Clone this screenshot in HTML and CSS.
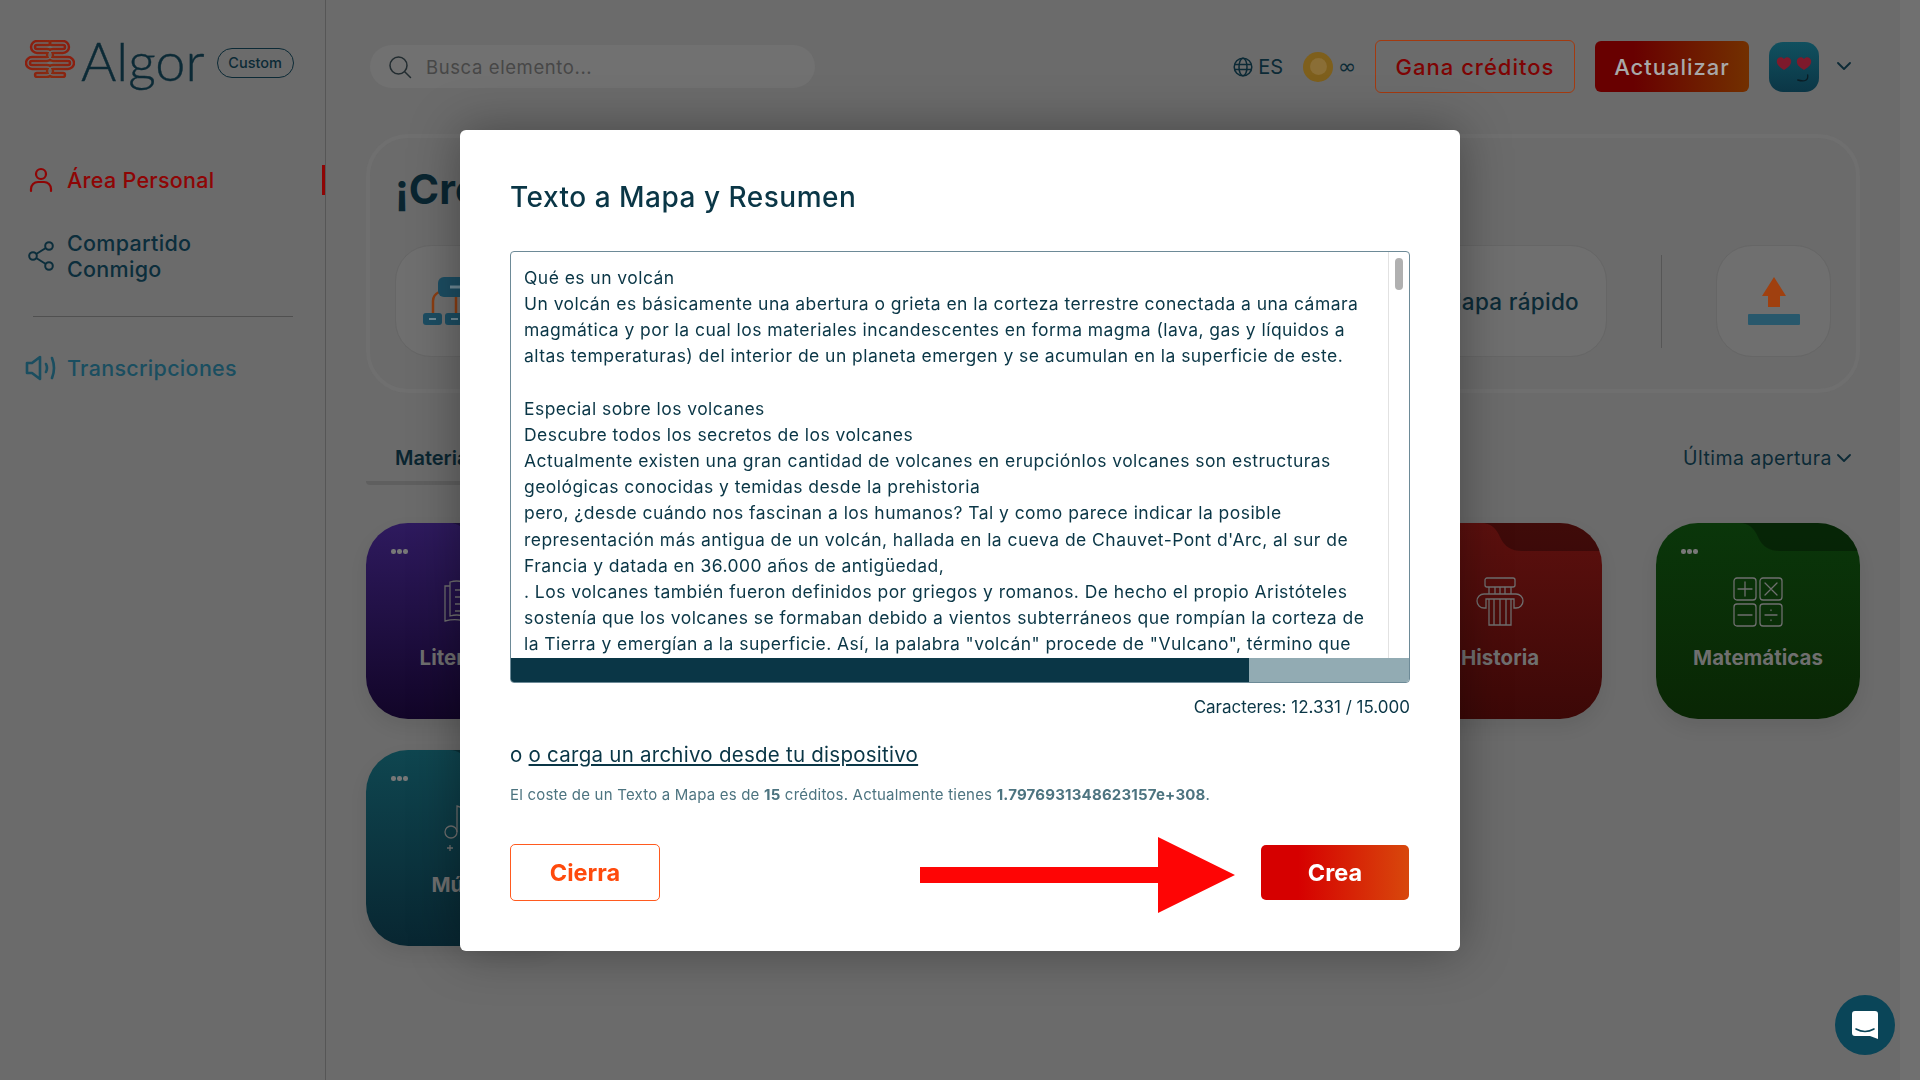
FILE: index.html
```html
<!DOCTYPE html>
<html lang="es">
<head>
  <meta charset="UTF-8">
  <title>Algor</title>
  <link rel="stylesheet" href="styles.css">
</head>
<body>
  <div class="app">
    <aside class="sidebar">
      <div class="logo-row">
        <svg class="brain" viewBox="0 0 50 38" width="50" height="38">
          <defs>
            <linearGradient id="brainGrad" gradientUnits="userSpaceOnUse" x1="0" y1="0" x2="50" y2="20">
              <stop offset="0" stop-color="#8c1a0e"/>
              <stop offset="1" stop-color="#853412"/>
            </linearGradient>
            <path id="lobe" d="M23 3H12a4 4 0 0 0 0 8h10a4 4 0 0 1 0 8H7a4 4 0 0 0 0 8h15a4 4 0 0 1 0 8H12"/>
          </defs>
          <g fill="none" stroke-linecap="round">
            <g stroke="url(#brainGrad)" stroke-width="6.4">
              <use href="#lobe"/>
              <use href="#lobe" transform="matrix(-1 0 0 1 50 0)"/>
            </g>
            <g stroke="#6b6b6b" stroke-width="1.5">
              <use href="#lobe"/>
              <use href="#lobe" transform="matrix(-1 0 0 1 50 0)"/>
            </g>
          </g>
        </svg>
        <span class="logo-text">Algor</span>
        <span class="plan-pill">Custom</span>
      </div>

      <nav class="nav">
        <a class="nav-item nav-item-active">
          <svg class="nav-icon" viewBox="0 0 24 26" width="24" height="26" fill="none" stroke="currentColor" stroke-width="2.2" stroke-linecap="round">
            <circle cx="12" cy="7" r="5"/>
            <path d="M2 24v-2a7 7 0 0 1 7-7h6a7 7 0 0 1 7 7v2"/>
          </svg>
          <span>Área Personal</span>
        </a>
        <a class="nav-item">
          <svg class="nav-icon" viewBox="0 0 26 30" width="26" height="30" fill="none" stroke="currentColor" stroke-width="2">
            <circle cx="5" cy="15" r="3.8"/>
            <circle cx="21" cy="5" r="3.8"/>
            <circle cx="21" cy="25" r="3.8"/>
            <path d="M8.2 13 17.8 7M8.2 17l9.6 6"/>
          </svg>
          <span>Compartido<br>Conmigo</span>
        </a>
      </nav>
      <div class="nav-divider"></div>
      <a class="nav-item nav-item-sound">
        <svg class="nav-icon" viewBox="0 0 32 26" width="32" height="26" fill="none" stroke="currentColor" stroke-width="2.6" stroke-linecap="round" stroke-linejoin="round">
          <path d="M2 8h5l8-6v22l-8-6H2z"/>
          <path d="M21 9q2 4 0 8M27 3q4 10 0 20"/>
        </svg>
        <span>Transcripciones</span>
      </a>
    </aside>

    <main class="main">
      <header class="topbar">
        <div class="search">
          <svg viewBox="0 0 24 24" width="24" height="24" fill="none" stroke="#222c30" stroke-width="1.5" stroke-linecap="round">
            <circle cx="10.5" cy="10.5" r="8.5"/>
            <path d="m17 17 5.5 5.5"/>
          </svg>
          <span>Busca elemento...</span>
        </div>
        <div class="topbar-right">
          <svg class="globe" viewBox="0 0 20 20" width="20" height="20" fill="none" stroke="#0c2a36" stroke-width="1.5">
            <circle cx="10" cy="10" r="8.8"/>
            <ellipse cx="10" cy="10" rx="4" ry="8.8"/>
            <path d="M1.5 7.5h17M1.5 12.5h17"/>
          </svg>
          <span class="lang">ES</span>
          <span class="coin"><span class="coin-inner"></span></span>
          <span class="infinity">∞</span>
          <button class="btn-credits">Gana créditos</button>
          <button class="btn-upgrade">Actualizar</button>
          <span class="avatar">
            <svg viewBox="0 0 50 50" width="50" height="50">
              <path d="M15 28c-5-3-8-6-7-10 1-3 5-4 7-1 2-3 6-2 7 1 1 4-2 7-7 10z" fill="#7d1a2c"/>
              <path d="M35 28c-5-3-8-6-7-10 1-3 5-4 7-1 2-3 6-2 7 1 1 4-2 7-7 10z" fill="#7d1a2c"/>
              <path d="M38.7 33q1 8-10 5" fill="none" stroke="#0a1c24" stroke-width="1.3" stroke-linecap="round"/>
            </svg>
          </span>
          <svg class="chevron" viewBox="0 0 14 9" width="14" height="9" fill="none" stroke="#0c2a36" stroke-width="1.8" stroke-linecap="round" stroke-linejoin="round">
            <path d="m1 1 6 6 6-6"/>
          </svg>
        </div>
      </header>

      <section class="create-panel">
        <h2 class="create-title">¡Crea</h2>
        <div class="create-row">
          <div class="tile tile-map">
            <svg viewBox="0 0 60 48" width="60" height="48">
              <path d="M10 36V24q0-6 6-9M33 36V18" fill="none" stroke="#8a3d12" stroke-width="2.5"/>
              <rect x="15" y="0" width="42" height="20" rx="6" fill="#1c4d62"/>
              <rect x="27" y="8.5" width="14" height="3" fill="#6f8a96"/>
              <rect x="0" y="36" width="19" height="12" rx="3" fill="#1c4d62"/>
              <rect x="22" y="36" width="19" height="12" rx="3" fill="#1c4d62"/>
              <rect x="6" y="41" width="7" height="2" fill="#6f8a96"/>
              <rect x="28" y="41" width="7" height="2" fill="#6f8a96"/>
            </svg>
          </div>
          <div class="tile tile-quick">Mapa rápido</div>
          <div class="create-divider"></div>
          <div class="tile tile-upload">
            <svg viewBox="0 0 52 48" width="52" height="48">
              <path d="M26 0 38 19H32V30H20V19H14z" fill="#a0400f"/>
              <rect x="0" y="37" width="52" height="11" rx="1" fill="#28586c"/>
            </svg>
          </div>
        </div>
      </section>

      <div class="tabs-row">
        <div class="tab-active">Materiales</div>
        <div class="sort">
          <span>Última apertura</span>
          <svg viewBox="0 0 14 9" width="14" height="9" fill="none" stroke="#0c2a36" stroke-width="1.8" stroke-linecap="round" stroke-linejoin="round">
            <path d="m1 1 6 6 6-6"/>
          </svg>
        </div>
      </div>

      <div class="folders">
        <div class="folder folder-purple">
          <svg class="folder-tab" viewBox="0 0 120 28" width="120" height="28"><path d="M0 0q12 0 18 14 6 14 22 14h80V0z"/></svg>
          <div class="folder-dots"><i></i><i></i><i></i></div>
          <svg class="folder-icon" viewBox="0 0 50 50" width="50" height="50" fill="none" stroke="#6f6f6f" stroke-width="1.3">
            <path d="M25 46V8M25 46C18 42 10 42 2 44V9h5M25 46c7-4 15-4 23-2V9h-5"/>
            <path d="M7 39V5c7-2 13-1 18 3 5-4 11-5 18-3v34c-7-2-13-1-18 3-5-4-11-5-18-3z"/>
            <path d="M12 13h9M12 20h9M12 27h9M12 34h9M29 13h9M29 20h9M29 27h9M29 34h9"/>
          </svg>
          <div class="folder-label">Literatura</div>
        </div>
        <div class="folder folder-red folder-col5">
          <svg class="folder-tab" viewBox="0 0 120 28" width="120" height="28"><path d="M0 0q12 0 18 14 6 14 22 14h80V0z"/></svg>
          <svg class="folder-icon" viewBox="0 0 50 50" width="50" height="50" fill="none" stroke="#6f6f6f" stroke-width="1.3">
            <rect x="10" y="1" width="30" height="9" rx="2"/>
            <path d="M14 10v7M20 10v7M25 10v7M30 10v7M36 10v7"/>
            <path d="M9 17h32a6.5 6.5 0 0 1 0 14h-2V22H11v9H9a6.5 6.5 0 0 1 0-14z"/>
            <path d="M14 22v26h22V22M19 22v26M25 22v26M31 22v26"/>
          </svg>
          <div class="folder-label">Historia</div>
        </div>
        <div class="folder folder-green">
          <svg class="folder-tab" viewBox="0 0 120 28" width="120" height="28"><path d="M0 0q12 0 18 14 6 14 22 14h80V0z"/></svg>
          <div class="folder-dots"><i></i><i></i><i></i></div>
          <svg class="folder-icon" viewBox="0 0 50 50" width="50" height="50" fill="none" stroke="#6f6f6f" stroke-width="1.3" stroke-linecap="round">
            <rect x="1" y="1" width="22" height="22" rx="3"/>
            <rect x="27" y="1" width="22" height="22" rx="3"/>
            <rect x="1" y="27" width="22" height="22" rx="3"/>
            <rect x="27" y="27" width="22" height="22" rx="3"/>
            <path d="M5 12h14M12 5v14M32 6l12 12M44 6 32 18M5 38h14M32 38h12M38 33v.5M38 43v.5"/>
          </svg>
          <div class="folder-label">Matemáticas</div>
        </div>
        <div class="folder folder-teal">
          <svg class="folder-tab" viewBox="0 0 120 28" width="120" height="28"><path d="M0 0q12 0 18 14 6 14 22 14h80V0z"/></svg>
          <div class="folder-dots"><i></i><i></i><i></i></div>
          <svg class="folder-icon" viewBox="0 0 50 50" width="50" height="50" fill="none" stroke="#6f6f6f" stroke-width="1.3">
            <circle cx="8" cy="28" r="6"/>
            <path d="M14 28V2q8 2 12 10M4 44h6M7 41v6"/>
          </svg>
          <div class="folder-label">Música</div>
        </div>
      </div>
    </main>
    <div class="page-scroll"></div>
  </div>

  <div class="chat-bubble">
    <svg viewBox="0 0 28 30" width="28" height="30">
      <path d="M4 1h20a3 3 0 0 1 3 3v25l-8-3H4a3 3 0 0 1-3-3V4a3 3 0 0 1 3-3z" fill="#fff"/>
      <path d="M5 19q9 5 18 0" fill="none" stroke="#0a4558" stroke-width="1.6" stroke-linecap="round"/>
    </svg>
  </div>

  <div class="modal-backdrop">
    <div class="modal">
      <h1 class="modal-title">Texto a Mapa y Resumen</h1>
      <div class="text-box">
        <div class="text-area">
          <div class="text-lines">Qué es un volcán
Un volcán es básicamente una abertura o grieta en la corteza terrestre conectada a una cámara
magmática y por la cual los materiales incandescentes en forma magma (lava, gas y líquidos a
altas temperaturas) del interior de un planeta emergen y se acumulan en la superficie de este.

Especial sobre los volcanes
Descubre todos los secretos de los volcanes
Actualmente existen una gran cantidad de volcanes en erupciónlos volcanes son estructuras
geológicas conocidas y temidas desde la prehistoria
pero, ¿desde cuándo nos fascinan a los humanos? Tal y como parece indicar la posible
representación más antigua de un volcán, hallada en la cueva de Chauvet-Pont d'Arc, al sur de
Francia y datada en 36.000 años de antigüedad,
. Los volcanes también fueron definidos por griegos y romanos. De hecho el propio Aristóteles
sostenía que los volcanes se formaban debido a vientos subterráneos que rompían la corteza de
la Tierra y emergían a la superficie. Así, la palabra "volcán" procede de "Vulcano", término que</div>
          <div class="text-scroll"><div class="text-thumb"></div></div>
        </div>
        <div class="progress"><div class="progress-fill" style="width: 82.2%"></div></div>
      </div>
      <div class="char-count">Caracteres: 12.331 / 15.000</div>
      <div class="upload-line">o <a class="upload-link">o carga un archivo desde tu dispositivo</a></div>
      <div class="cost-line">El coste de un Texto a Mapa es de <b>15</b> créditos. Actualmente tienes <b>1.7976931348623157e+308</b>.</div>
      <div class="modal-actions">
        <button class="btn-close">Cierra</button>
        <svg class="red-arrow" viewBox="0 0 315 76" width="315" height="76">
          <path d="M0 30H238V0L315 38 238 76V46H0z" fill="#fe0505"/>
        </svg>
        <button class="btn-create">Crea</button>
      </div>
    </div>
  </div>
</body>
</html>
```

FILE: styles.css
```css
* {
  box-sizing: border-box;
}

body {
  margin: 0;
  height: 100vh;
  overflow: hidden;
  background: #6b6b6b;
  color: #0c2a36;
  font-family: Inter, "Open Sans", sans-serif;
}

.app {
  display: flex;
  height: 100vh;
}

/* sidebar */

.sidebar {
  width: 326px;
  flex-shrink: 0;
  border-right: 1px solid #565656;
  padding: 40px 0 0 25px;
}

.logo-row {
  display: flex;
  align-items: center;
  height: 42px;
}

.brain {
  margin-top: -4px;
}

.logo-text {
  font-family: Lato, sans-serif;
  font-weight: 300;
  font-size: 54px;
  color: #0c2a36;
  margin-left: 6px;
  line-height: 42px;
  -webkit-text-stroke: 0.4px #0c2a36;
}

.plan-pill {
  margin-left: 12px;
  margin-top: 3px;
  width: 77px;
  height: 30px;
  border: 1px solid #0c2a36;
  border-radius: 15px;
  font-size: 14.5px;
  font-weight: 500;
  line-height: 28px;
  text-align: center;
}

.nav {
  margin-top: 85px;
  display: flex;
  flex-direction: column;
  gap: 37px;
}

.nav-item {
  display: flex;
  align-items: center;
  position: relative;
  font-size: 21.5px;
  font-weight: 500;
  line-height: 26px;
  letter-spacing: 0.3px;
  color: #0c2e3c;
}

.nav-icon {
  flex-shrink: 0;
  width: 32px;
  margin-right: 10px;
}

.nav-item-active {
  color: #8e0505;
}

.nav-item-active::after {
  content: "";
  position: absolute;
  right: 0;
  top: -2px;
  width: 3px;
  height: 30px;
  background: #8e0505;
}

.nav-divider {
  margin: 34px 32px 0 8px;
  border-top: 1px solid #505050;
}

.nav-item-sound {
  margin-top: 38px;
  color: #1a4e60;
}

/* topbar */

.main {
  flex: 1;
  min-width: 0;
  padding: 45px 40px 0 40px;
}

.page-scroll {
  width: 20px;
  background: #707070;
}

.topbar {
  display: flex;
  align-items: center;
  justify-content: space-between;
  height: 43px;
  padding-right: 9px;
}

.search {
  display: flex;
  align-items: center;
  gap: 14px;
  width: 445px;
  height: 43px;
  margin-left: 4px;
  padding-left: 18px;
  background: #717171;
  border-radius: 22px;
  font-size: 18.5px;
  letter-spacing: 0.6px;
  color: #474747;
}

.topbar-right {
  display: flex;
  align-items: center;
}

.lang {
  margin-left: 5px;
  font-size: 20px;
  color: #0c2a36;
}

.coin {
  display: flex;
  align-items: center;
  justify-content: center;
  width: 30px;
  height: 30px;
  margin-left: 20px;
  border-radius: 50%;
  background: #7e5f1c;
}

.coin-inner {
  width: 17px;
  height: 17px;
  border-radius: 50%;
  background: #8a6e36;
}

.infinity {
  margin-left: 5px;
  width: 16px;
  font-size: 22px;
  line-height: 22px;
  color: #0c2a36;
  font-family: "DejaVu Sans", sans-serif;
}

.btn-credits {
  width: 200px;
  height: 53px;
  margin-left: 21px;
  background: transparent;
  border: 1.5px solid #a33a10;
  border-radius: 6px;
  color: #7e0303;
  font: 500 22px Inter, sans-serif;
  letter-spacing: 1px;
}

.btn-upgrade {
  width: 154px;
  height: 51px;
  margin-left: 20px;
  background: linear-gradient(90deg, #680000 25%, #723000);
  border: none;
  border-radius: 6px;
  color: #a8a8a8;
  font: 500 22px Inter, sans-serif;
  letter-spacing: 1px;
}

.avatar {
  display: block;
  width: 50px;
  height: 50px;
  margin-left: 20px;
  border-radius: 14px;
  background: linear-gradient(#10505f, #0b3646);
  overflow: hidden;
}

.chevron {
  margin-left: 18px;
}

/* create panel */

.create-panel {
  height: 259px;
  margin-top: 46px;
  border: 4px solid #6f6f6f;
  border-radius: 42px;
  padding: 26px 25px 0 25px;
}

.create-title {
  margin: 0;
  font-size: 41px;
  line-height: 50px;
  font-weight: 700;
  color: #0a2530;
}

.create-row {
  display: flex;
  align-items: center;
  margin-top: 31px;
}

.tile {
  display: flex;
  align-items: center;
  justify-content: center;
  height: 112px;
  background: #6f6f6f;
  border: 1px solid #666;
  border-radius: 36px;
}

.tile-map {
  width: 280px;
  justify-content: flex-start;
  padding-left: 27px;
}

.tile-quick {
  margin-left: auto;
  width: 280px;
  font-size: 22.5px;
  letter-spacing: 0.3px;
  font-weight: 500;
  color: #0c2a36;
  justify-content: flex-end;
  padding-right: 27px;
}

.create-divider {
  width: 1px;
  height: 93px;
  margin: 0 54px;
  background: #565656;
}

.tile-upload {
  width: 115px;
}

/* materials */

.tabs-row {
  display: flex;
  align-items: flex-start;
  justify-content: space-between;
  margin-top: 50px;
  height: 42px;
}

.tab-active {
  width: 300px;
  height: 42px;
  padding-left: 29px;
  border-bottom: 4px solid #5f5f5f;
  border-radius: 0 0 4px 4px;
  font-size: 20px;
  font-weight: 600;
  line-height: 30px;
  color: #0a2530;
}

.sort {
  display: flex;
  align-items: center;
  gap: 5px;
  font-size: 19.5px;
  letter-spacing: 0.45px;
  line-height: 30px;
  color: #0c2a36;
  padding-right: 9px;
}

.folders {
  display: grid;
  grid-template-columns: repeat(6, 204px);
  grid-auto-rows: 196px;
  column-gap: 54px;
  row-gap: 31px;
  margin-top: 38px;
}

.folder {
  position: relative;
  display: flex;
  flex-direction: column;
  align-items: center;
  padding-top: 54px;
  border-radius: 42px;
  overflow: hidden;
  box-shadow: 0 8px 18px rgba(0, 0, 0, 0.08);
}

.folder-col5 {
  grid-column: 5;
}

.folder-purple {
  background: linear-gradient(#2e1a5e, #120528);
}

.folder-teal {
  grid-column: 1;
  background: linear-gradient(#0f4650, #082631);
}

.folder-red {
  background: linear-gradient(#5c100e, #3c0807);
}

.folder-green {
  background: linear-gradient(#0a360a, #092604);
}

.folder-tab {
  position: absolute;
  top: 0;
  right: 0;
  fill: rgba(0, 0, 0, 0.3);
}

.folder-dots {
  position: absolute;
  top: 26px;
  left: 25px;
  display: flex;
  gap: 1.5px;
}

.folder-dots i {
  width: 4.5px;
  height: 4.5px;
  border-radius: 50%;
  background: #777;
}

.folder-label {
  margin-top: 18px;
  font-size: 20.5px;
  font-weight: 700;
  line-height: 26px;
  color: #6f6f6f;
}

/* chat */

.chat-bubble {
  position: fixed;
  right: 25px;
  bottom: 25px;
  display: flex;
  align-items: center;
  justify-content: center;
  width: 60px;
  height: 60px;
  border-radius: 50%;
  background: #0a4558;
}

/* modal */

.modal-backdrop {
  position: fixed;
  inset: 0;
  display: flex;
  align-items: center;
  justify-content: center;
}

.modal {
  width: 1000px;
  height: 821px;
  padding: 50px 50px 0;
  background: #fff;
  border-radius: 6px;
  box-shadow: 0 0 50px rgba(0, 0, 0, 0.35);
  color: #0a3646;
}

.modal-title {
  margin: 0;
  font-size: 28px;
  letter-spacing: 0.5px;
  font-weight: 500;
  line-height: 34px;
}

.text-box {
  height: 432px;
  margin-top: 37px;
  border: 1px solid #6d8a97;
  border-radius: 4px;
  overflow: hidden;
  display: flex;
  flex-direction: column;
}

.text-area {
  flex: 1;
  min-height: 0;
  display: flex;
  justify-content: space-between;
  overflow: hidden;
}

.text-lines {
  padding: 13px 0 0 13px;
  font-size: 17.5px;
  letter-spacing: 0.45px;
  line-height: 26.2px;
  white-space: pre;
}

.text-scroll {
  width: 21px;
  flex-shrink: 0;
  padding: 6px 5px 0 6px;
  border-left: 1px solid #e2e2e2;
}

.text-thumb {
  width: 8px;
  height: 32px;
  border-radius: 4px;
  background: #b0b0b0;
}

.progress {
  height: 24px;
  flex-shrink: 0;
  background: #92abb3;
}

.progress-fill {
  height: 100%;
  background: #0a3646;
}

.char-count {
  margin-top: 13px;
  text-align: right;
  font-size: 17px;
  line-height: 22px;
}

.upload-line {
  margin-top: 24px;
  font-size: 20.5px;
  letter-spacing: 0.25px;
  line-height: 26px;
}

.upload-link {
  text-decoration: underline;
}

.cost-line {
  margin-top: 15px;
  font-size: 15px;
  letter-spacing: 0.2px;
  line-height: 24px;
  color: #4d7480;
}

.modal-actions {
  position: relative;
  display: flex;
  align-items: center;
  justify-content: space-between;
  height: 57px;
  margin-top: 37px;
}

.btn-close {
  width: 150px;
  height: 57px;
  background: #fff;
  border: 1px solid #ff5a1f;
  border-radius: 5px;
  color: #ff4a0c;
  font: 700 23.5px Inter, sans-serif;
}

.btn-create {
  width: 148px;
  height: 55px;
  margin-right: 1px;
  background: linear-gradient(90deg, #d60000 25%, #d8480c);
  border: none;
  border-radius: 5px;
  color: #fff;
  font: 700 23.5px Inter, sans-serif;
}

.red-arrow {
  position: absolute;
  left: 410px;
  top: -7px;
}
```
